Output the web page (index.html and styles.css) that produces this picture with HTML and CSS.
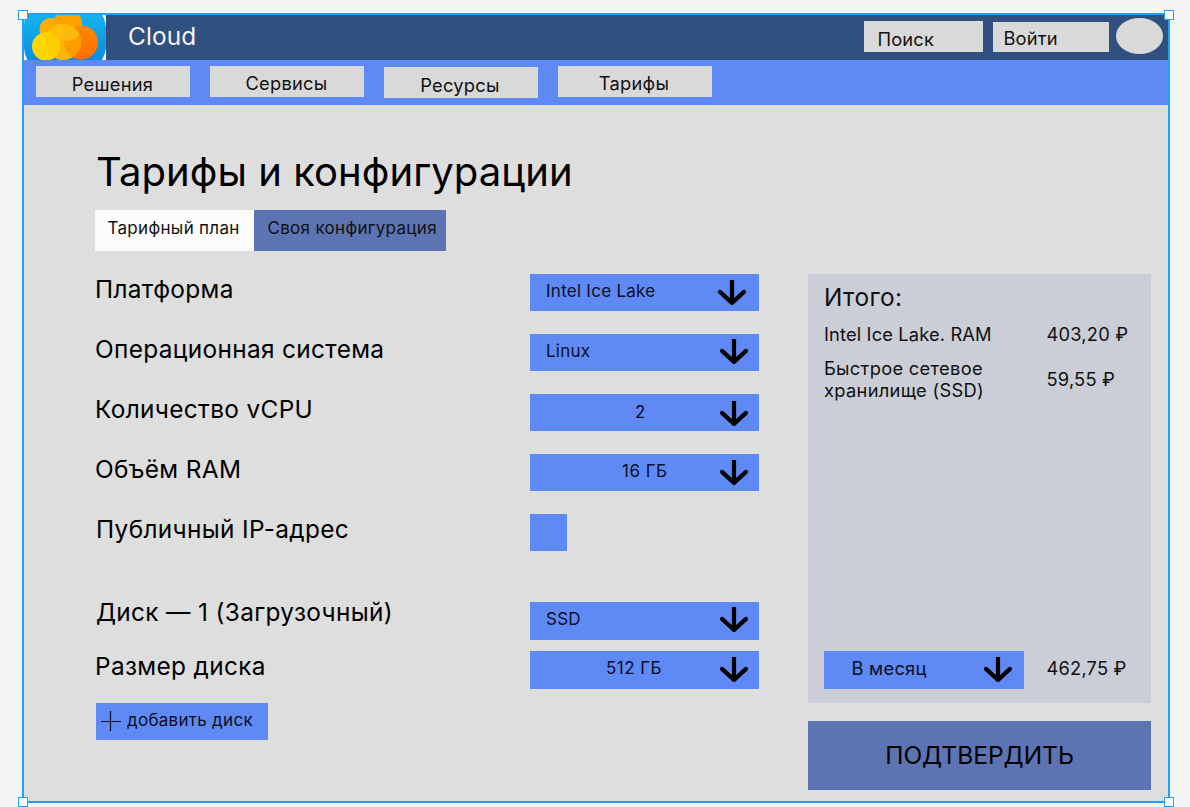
FILE: index.html
```html
<!DOCTYPE html>
<html lang="ru">
<head>
<meta charset="utf-8">
<title>Cloud — Тарифы и конфигурации</title>
<link rel="stylesheet" href="styles.css">
</head>
<body>
<svg class="defs" width="0" height="0" aria-hidden="true">
  <symbol id="arrow" viewBox="0 0 30 27">
    <path d="M15 0V23" fill="none" stroke="#000" stroke-width="4.2"/>
    <path d="M3 11.900L15 22.900L27 11.900" fill="none" stroke="#000" stroke-width="4.2" stroke-linecap="round" stroke-linejoin="round"/>
  </symbol>
</svg>
<div class="frame">
  <header class="topbar">
    <svg class="logo" viewBox="0 0 82 45">
      <defs>
        <linearGradient id="sky" x1="0" y1="0" x2="0" y2="1"><stop offset="0" stop-color="#14b2ea"/><stop offset="1" stop-color="#0b8de3"/></linearGradient>
        <linearGradient id="top" x1="0" y1="0" x2="0" y2="1"><stop offset="0" stop-color="#ff9d00"/><stop offset="1" stop-color="#ffb000"/></linearGradient>
        <linearGradient id="right" x1="0" y1="0" x2="0" y2="1"><stop offset="0" stop-color="#ff8a00"/><stop offset="1" stop-color="#ff6d00"/></linearGradient>
        <clipPath id="middle"><circle cx="39" cy="27" r="18"/></clipPath>
      </defs>
      <rect width="82" height="45" fill="#fff"/>
      <path d="M2 0H78.500Q81.500 6 82 12V33Q81.500 39 78 45H3.500Q0 39 0 33V10Q0 5 2 0Z" fill="url(#sky)"/>
      <circle cx="27" cy="14.500" r="11.500" fill="#ffad00"/>
      <path d="M32 0H55.500Q58 4 58 10A15 16 0 0 1 28 12Z" fill="url(#top)"/>
      <circle cx="57" cy="27.500" r="17" fill="url(#right)"/>
      <circle cx="39" cy="27" r="18" fill="#ffb505"/>
      <g clip-path="url(#middle)">
        <circle cx="57" cy="27.500" r="17" fill="#ff9c00"/>
        <circle cx="43" cy="11" r="15" fill="#ffb90c"/>
        <circle cx="27" cy="14.500" r="11.500" fill="#ffc108"/>
      </g>
      <circle cx="22" cy="31.500" r="14" fill="#ffd800"/>
      <circle cx="22" cy="31.500" r="14" fill="#ffce00" clip-path="url(#middle)"/>
    </svg>
    <div class="brand">Cloud</div>
    <div class="search">Поиск</div>
    <div class="login">Войти</div>
    <div class="avatar"></div>
  </header>
  <nav class="nav">
    <a class="solutions">Решения</a><a class="services">Сервисы</a><a class="resources">Ресурсы</a><a class="tariffs">Тарифы</a>
  </nav>
  <main class="main">
    <h1>Тарифы и конфигурации</h1>
    <div class="tabs"><div class="tab">Тарифный план</div><div class="tab active">Своя конфигурация</div></div>
    <div class="columns">
      <section class="form">
        <div class="row"><span class="label platform">Платформа</span><div class="select first"><span class="value">Intel Ice Lake</span><svg class="arrow"><use href="#arrow"/></svg></div></div>
        <div class="row"><span class="label os">Операционная система</span><div class="select os-select"><span class="value">Linux</span><svg class="arrow"><use href="#arrow"/></svg></div></div>
        <div class="row"><span class="label cpu">Количество vCPU</span><div class="select cpu-select"><span class="value">2</span><svg class="arrow"><use href="#arrow"/></svg></div></div>
        <div class="row"><span class="label ram">Объём RAM</span><div class="select ram-select"><span class="value">16 ГБ</span><svg class="arrow"><use href="#arrow"/></svg></div></div>
        <div class="row ip-row"><span class="label ip">Публичный IP-адрес</span><div class="checkbox"></div></div>
        <div class="row disk-row"><span class="label disk">Диск — 1 (Загрузочный)</span><div class="select disk-select"><span class="value">SSD</span><svg class="arrow"><use href="#arrow"/></svg></div></div>
        <div class="row size-row"><span class="label size">Размер диска</span><div class="select size-select"><span class="value">512 ГБ</span><svg class="arrow"><use href="#arrow"/></svg></div></div>
        <div class="add"><svg class="plus" viewBox="0 0 20 20"><path d="M0 10.500H20M9.500 0V20" stroke="#0a1024" stroke-width="1.200"/></svg><span>добавить диск</span></div>
      </section>
      <aside class="side">
        <div class="summary">
          <h2>Итого:</h2>
          <div class="item cpu-item"><span class="name">Intel Ice Lake. RAM</span><span class="price">403,20 ₽</span></div>
          <div class="item disk-item"><span class="name">Быстрое сетевое<br>хранилище (SSD)</span><span class="price">59,55 ₽</span></div>
          <div class="total"><div class="select period"><span class="value">В месяц</span><svg class="arrow"><use href="#arrow"/></svg></div><span class="price">462,75 ₽</span></div>
        </div>
        <div class="confirm">ПОДТВЕРДИТЬ</div>
      </aside>
    </div>
  </main>
  <i class="handle tl"></i><i class="handle tr"></i><i class="handle bl"></i><i class="handle br"></i>
</div>
</body>
</html>
```
FILE: styles.css
```css
* { box-sizing: border-box; }
body { margin: 0; height: 807px; overflow: hidden; background: #f5f5f5; font-family: Inter, "Liberation Sans", sans-serif; color: #000; padding: 13px 0 0 22px; }
.defs { display: block; height: 0; }
.frame { position: relative; width: 1148px; height: 790px; border: 2px solid #1fa0ff; background: #dedede; white-space: nowrap; }
.topbar { display: flex; height: 45px; background: #305080; }
.logo { width: 82px; height: 45px; flex: none; }
.brand { width: 758px; padding-left: 22px; font-size: 24.400px; letter-spacing: .1px; line-height: 42px; color: #f5f5f5; }
.search, .login { background: #d9d9d9; font-size: 18.300px; letter-spacing: .15px; color: #111; }
.search { width: 119px; height: 31px; margin-top: 6px; padding-left: 13.500px; line-height: 37px; }
.login { width: 116px; height: 30px; margin: 7px 0 0 10px; padding-left: 10.500px; line-height: 33px; }
.avatar { width: 47px; height: 36px; margin: 3px 0 0 7px; border-radius: 50%; background: #d9d9d9; }
.nav { display: flex; gap: 20px; height: 45px; padding: 6px 0 0 12px; background: #5f89f5; }
.nav a { width: 154px; height: 31px; padding-right: 1px; background: #d9d9d9; text-align: center; font-size: 18.300px; letter-spacing: .25px; line-height: 37px; color: #111; }
.nav .services, .nav .tariffs { line-height: 35px; }
.nav .resources, .nav .tariffs { padding-right: 2px; }
.nav .resources { margin-top: 1px; line-height: 37px; }
.main { padding-left: 71px; }
h1, h2 { margin: 0; font-weight: 400; }
h1 { height: 105px; padding: 43px 0 0 1px; font-size: 40px; letter-spacing: .06px; line-height: 48px; }
.tabs { display: flex; height: 41px; font-size: 17px; letter-spacing: .3px; line-height: 36px; color: #111; }
.tab { width: 159px; padding-left: 12.500px; background: #fcfcfc; }
.tab.active { width: 192px; padding-left: 13.500px; background: #5c74b2; }
.columns { display: flex; gap: 49px; padding-top: 23px; }
.form { display: flex; flex-direction: column; width: 664px; }
.row { display: flex; height: 37px; margin-bottom: 23px; }
.label { width: 435px; flex: none; font-size: 24.400px; letter-spacing: .34px; line-height: 31px; }
.select { display: flex; width: 229px; height: 37px; background: #5f89f5; color: #0a1024; }
.value { width: 186.500px; flex: none; padding-left: 16px; font-size: 17px; letter-spacing: .26px; line-height: 35px; }
.arrow { width: 30px; height: 27px; flex: none; margin-top: 6px; }
.os-select .value, .cpu-select .value, .ram-select .value, .disk-select .value, .size-select .value { width: 189px; }
.os-select .arrow { margin-top: 4.500px; }
.cpu-select .arrow { margin-top: 7px; }
.cpu-select .value { padding-left: 105px; line-height: 36px; }
.ram-select .value { padding-left: 92px; letter-spacing: .5px; }
.size-select .value { padding-left: 76px; letter-spacing: .45px; }
.disk-select .value { line-height: 34px; }
.size-select .value { line-height: 35px; }
.ip, .disk { padding-left: 1px; }
.checkbox { width: 37px; height: 37px; background: #5f89f5; }
.ip-row { margin-bottom: 51px; }
.label.disk { line-height: 21px; }
.disk-row { height: 38px; margin-bottom: 11px; }
.disk-select, .size-select { height: 38px; }
.size-row { height: 38px; margin-bottom: 14px; }
.disk-select .arrow { margin-top: 5px; }
.add { display: flex; width: 171.500px; height: 37px; margin-left: 1px; padding-left: 5px; gap: 6px; background: #5f89f5; font-size: 17px; letter-spacing: .28px; line-height: 34px; color: #0a1024; }
.plus { width: 20px; height: 20px; margin-top: 8px; }
.side { width: 343px; }
.summary { height: 429px; padding: 8px 0 0 16px; background: #cbcdd7; color: #111; font-size: 18.300px; letter-spacing: .2px; }
h2 { font-size: 24.400px; letter-spacing: .36px; line-height: 31px; }
.item { display: flex; }
.name { width: 222.500px; line-height: 22px; }
.cpu-item { padding-top: 10px; height: 44px; }
.cpu-item .name { letter-spacing: .14px; }
.disk-item .name { letter-spacing: .3px; }
.disk-item { height: 44px; }
.disk-item .price { line-height: 44px; }
.cpu-item .price { line-height: 22px; }
.total { display: flex; gap: 22.500px; padding-top: 250px; }
.total .price { line-height: 35px; }
.period { width: 200px; height: 38px; }
.period .value { width: 158.500px; padding-left: 27.500px; font-size: 18.300px; }
.confirm { margin-top: 18px; height: 69px; background: #5c74b2; text-align: center; font-size: 24.500px; line-height: 69px; }
.handle { position: absolute; width: 10px; height: 10px; background: #fff; border: 1.500px solid #1fa0ff; }
.tl { left: -6px; top: -5px; }
.tr { right: -6px; top: -5px; }
.bl { left: -6px; bottom: -6px; }
.br { right: -6px; bottom: -6px; }
```
